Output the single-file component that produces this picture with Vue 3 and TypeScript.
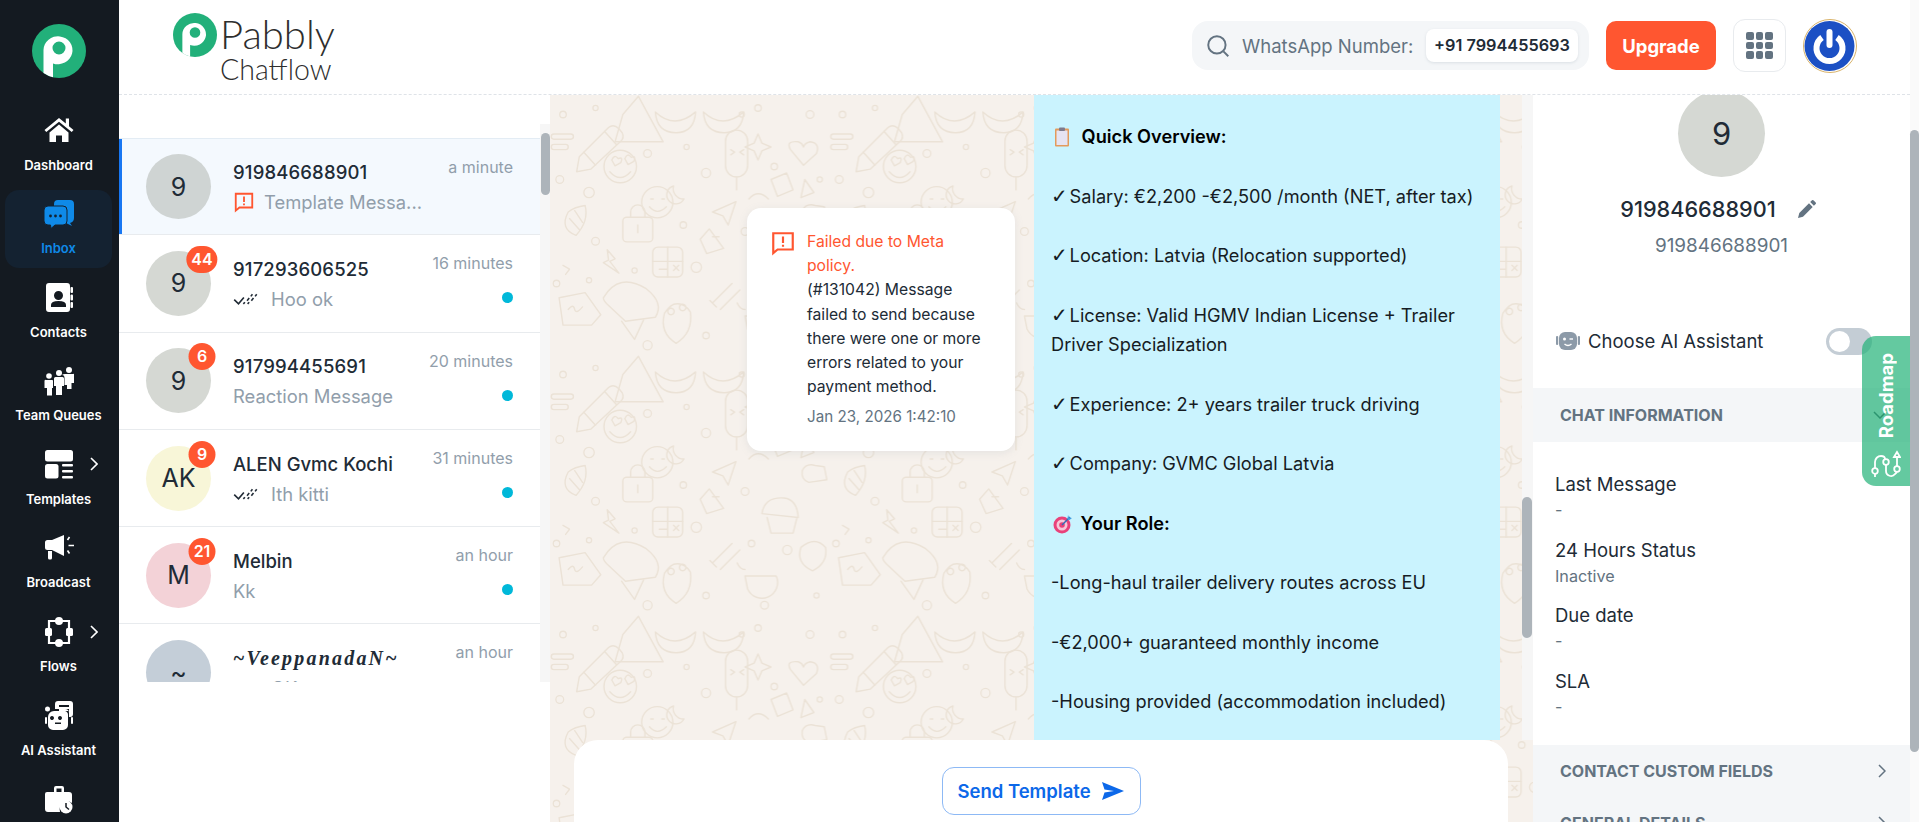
<template>
  <div class="app">
    <svg class="defs" width="0" height="0" aria-hidden="true">
      <symbol id="p-logo" viewBox="0 0 54 54">
        <circle cx="27" cy="27" r="27" fill="#22b07a" />
        <path
          fill="#fff"
          fill-rule="evenodd"
          d="M11.5 26a14.5 14 0 1 1 9.5 13.4V53.3Q16 52 11.5 49zM27 17.5a6.5 6.5 0 1 0 0 13 6.5 6.5 0 0 0 0-13z"
        />
      </symbol>
      <symbol id="failed" viewBox="0 0 24 24">
        <path fill="none" stroke="#ff5630" stroke-width="2" d="M3 3h18v15H7l-4 3.4z" />
        <path fill="#ff5630" d="M11 6h2v6h-2zM11 13.5h2v2h-2z" />
      </symbol>
      <symbol id="read" viewBox="0 0 24 14">
        <path
          fill="none"
          stroke="#212b36"
          stroke-width="1.5"
          d="M1 8l4 4 5-6M9.500 12l1.500-1.500M13 9l2-2.500M16.500 5l1.500-2M13.500 12l1.500-1.500M17 9l2-2.500M20.500 5l1.500-2"
        />
      </symbol>
    </svg>

    <aside class="sidebar">
      <div class="side-logo">
        <svg width="54" height="54"><use href="#p-logo" /></svg>
      </div>
      <nav class="side-nav">
        <a v-for="item in navItems" :key="item.icon" class="nav-item" :class="{ active: item.active }">
          <svg class="nav-icon" viewBox="0 0 30 30" width="30" height="30" fill="#fff">
            <template v-if="item.icon === 'home'">
              <path d="M15 3 0.500 15l1.800 2.100L15 6.700l12.700 10.400 1.800-2.100-4.500-3.700V3.500h-3.200v5.100z" />
              <path d="M5.500 17.500 15 9.600l9.500 7.900V27H18v-6.500h-6V27H5.500z" />
            </template>
            <template v-else-if="item.icon === 'inbox'">
              <path fill="#0f8ae8" d="M10 5a4 4 0 0 1 4-4h12a4 4 0 0 1 4 4v14q0 4-4 5l2 3-5-2.400V11q0-4-4-4H10z" />
              <path fill="#0f8ae8" stroke="#142231" stroke-width="1" d="M4 7h15a4 4 0 0 1 4 4v11a4 4 0 0 1-4 4h-8l-4 3.500-.5-3.500H4a4 4 0 0 1-4-4V11a4 4 0 0 1 4-4z" />
              <circle cx="6.500" cy="17" r="1.400" fill="#142231" />
              <circle cx="11.500" cy="17" r="1.400" fill="#142231" />
              <circle cx="16.500" cy="17" r="1.400" fill="#142231" />
            </template>
            <template v-else-if="item.icon === 'contacts'">
              <path fill-rule="evenodd" d="M5 1h18a3 3 0 0 1 3 3v23a3 3 0 0 1-3 3H5a3 3 0 0 1-3-3V4a3 3 0 0 1 3-3zm9.500 8a4.500 4.500 0 1 0 0 9 4.500 4.500 0 0 0 0-9zM7 25h15v-2q0-4-7.500-4T7 23z" />
              <rect x="26.500" y="5" width="2.500" height="6" rx="1" />
              <rect x="26.500" y="12.500" width="2.500" height="6" rx="1" />
              <rect x="26.500" y="20" width="2.500" height="6" rx="1" />
            </template>
            <template v-else-if="item.icon === 'team'">
              <circle cx="25" cy="4" r="3" />
              <path d="M21 8h8a1 1 0 0 1 1 2v7h-2.500v6h-4.500V19H20.500V12q0-3-2.500-3 1-1 3-1z" />
              <circle cx="15" cy="7" r="3" />
              <path d="M11.500 11h7a1.500 1.500 0 0 1 1.500 1.500V20h-2v9h-6v-9H10v-7.500a1.500 1.500 0 0 1 1.500-1.500z" />
              <circle cx="5" cy="10" r="2.800" />
              <path d="M2 14h6.500a1 1 0 0 1 .5 1v7H8v7.500H3V22H.500v-7A1 1 0 0 1 2 14z" />
            </template>
            <template v-else-if="item.icon === 'templates'">
              <rect x="1" y="1" width="28" height="11.500" rx="2.500" />
              <rect x="1" y="15" width="13.500" height="14.500" rx="2.500" />
              <rect x="18" y="15" width="11" height="2.600" rx="1" />
              <rect x="18" y="21" width="11" height="2.600" rx="1" />
              <rect x="18" y="27" width="11" height="2.600" rx="1" />
            </template>
            <template v-else-if="item.icon === 'broadcast'">
              <path d="M20 2v21L8 17H3.500a2.500 2.500 0 0 1-2.500-2.500v-5A2.500 2.500 0 0 1 3.500 7H8z" />
              <path d="M4 18h4v7a1.500 1.500 0 0 1-1.500 1.500h-1A1.500 1.500 0 0 1 4 25z" />
              <path fill="none" stroke="#fff" stroke-width="1.600" d="M23.500 7l2-3M24.500 12.500H30M23.500 17.500l2 3" />
            </template>
            <template v-else-if="item.icon === 'flows'">
              <path fill="none" stroke="#fff" stroke-width="2.200" d="M5 4h20v22H5z" />
              <circle cx="15" cy="4" r="4" />
              <circle cx="15" cy="26" r="4" />
              <rect x="1" y="11" width="7" height="8" rx="1.500" />
              <rect x="22" y="11" width="7" height="8" rx="1.500" />
            </template>
            <template v-else-if="item.icon === 'ai'">
              <path fill-rule="evenodd" d="M14 1h12a3 3 0 0 1 3 3v10a3 3 0 0 1-3 3h-1V13a4 4 0 0 0-4-4H11V4a3 3 0 0 1 3-3zm1 4v2h10V5zm0 4v2h10V9z" />
              <path fill-rule="evenodd" d="M10 11h11a4 4 0 0 1 3 4v10a5 5 0 0 1-5 5H9a5 5 0 0 1-5-5V17a6 6 0 0 1 6-6zm0 7a2 2 0 1 0 0 .01zm8 0a2 2 0 1 0 0 .01zM11 24h6v-1.500h-6z" />
              <circle cx="3.500" cy="9" r="2.500" />
              <rect x="1" y="17" width="2" height="7" rx="1" />
              <rect x="27" y="17" width="2" height="7" rx="1" />
            </template>
            <template v-else>
              <path d="M3 8h7V4a2 2 0 0 1 2-2h6a2 2 0 0 1 2 2v4h5a3 3 0 0 1 3 3v8a8 8 0 0 0-12 9H4a3 3 0 0 1-3-3V10a2 2 0 0 1 2-2zm9.500 0h5V4.500h-5z" />
              <circle cx="22" cy="23" r="6.500" />
              <path fill="none" stroke="#141a21" stroke-width="1.500" d="M22 19v4l3 2.500" />
            </template>
          </svg>
          <span v-if="item.label" class="nav-label">{{ item.label }}</span>
          <svg v-if="item.more" class="nav-more" viewBox="0 0 8 14" width="8" height="14">
            <path fill="none" stroke="#fff" stroke-width="1.600" d="M1 1l6 6-6 6" />
          </svg>
        </a>
      </nav>
    </aside>

    <div class="main">
      <header class="topbar">
        <div class="brand">
          <svg width="44" height="44"><use href="#p-logo" /></svg>
          <div class="brand-text">
            <div class="brand-name">Pabbly</div>
            <div class="brand-sub">Chatflow</div>
          </div>
        </div>
        <div class="top-actions">
          <div class="number-box">
            <svg viewBox="0 0 24 24" width="26" height="26">
              <circle cx="11" cy="11" r="8" fill="none" stroke="#637381" stroke-width="1.800" />
              <path stroke="#637381" stroke-width="1.800" d="M17 17l4.500 4.500" />
            </svg>
            <span class="number-label">WhatsApp Number:</span>
            <span class="number-value">+91 7994455693</span>
          </div>
          <button class="upgrade">Upgrade</button>
          <div class="apps">
            <i v-for="n in 9" :key="n"></i>
          </div>
          <svg class="profile" viewBox="0 0 54 54" width="54" height="54">
            <circle cx="27" cy="27" r="26.500" fill="#fff" stroke="#d9b36a" />
            <circle cx="26.500" cy="27" r="25" fill="#1c50c4" />
            <path fill="none" stroke="#fff" stroke-width="6" d="M19 18.500a13 13 0 1 0 15 0" />
            <path stroke="#fff" stroke-width="6" stroke-linecap="round" d="M26.500 13v13" />
          </svg>
        </div>
      </header>

      <div class="body">
        <section class="list-panel">
          <div class="list-wrap">
            <div class="list">
              <div
                v-for="row in rows"
                :key="row.name"
                class="row"
                :class="{ selected: row.selected }"
              >
                <div class="avatar" :style="{ background: row.color }">
                  {{ row.initials }}
                  <span v-if="row.unread" class="badge">{{ row.unread }}</span>
                </div>
                <div class="row-text">
                  <div class="row-name" :class="{ fancy: row.fancy, digits: row.digits }">{{ row.name }}</div>
                  <div class="row-preview">
                    <svg v-if="row.status === 'failed'" class="failed-icon" width="22" height="22"><use href="#failed" /></svg>
                    <svg v-if="row.status === 'read'" class="read-icon" width="26" height="15"><use href="#read" /></svg>
                    <span>{{ row.preview }}</span>
                  </div>
                </div>
                <div class="row-meta">
                  <span class="row-time">{{ row.time }}</span>
                  <i v-if="row.dot" class="dot"></i>
                </div>
              </div>
            </div>
            <div class="list-track"><div class="list-thumb"></div></div>
          </div>
        </section>

        <section class="chat">
          <svg class="doodles" width="100%" height="100%" aria-hidden="true">
            <defs>
              <pattern id="doodle" width="430" height="400" patternUnits="userSpaceOnUse" patternTransform="scale(0.65)">
                <g fill="none" stroke="#ebe2d6" stroke-width="2.200" stroke-linecap="round" stroke-linejoin="round">
                  <path d="M45 95l45-45q8-6 16 2l5 6q4 8-3 14l-45 42-22 4z" />
                  <path d="M52 88l18 20M84 56l18 20" />
                  <path d="M112 30l24-28 38 70H100z" />
                  <circle cx="108" cy="110" r="25" />
                  <path d="M92 118q16 18 32 0" />
                  <path d="M95 100q4-10 10-2 8-4 4 6l-9 5zM115 98q4-10 10-2 8-4 4 6l-9 5z" />
                  <path d="M162 26q30 28 62 0-2 32-30 32-30 0-32-32z" />
                  <path d="M236 26q30 28 62 0-2 32-30 32-30 0-32-32z" />
                  <rect x="270" y="54" width="34" height="72" rx="17" />
                  <path d="M287 126v20M278 84l6 4-6 4M298 84l-6 4 6 4" />
                  <path d="M320 60l6 14 14 6-14 6-6 14-6-14-14-6 14-6z" />
                  <path d="M370 84q-8-14 12-12 6 2 8 8 2-6 10-8 16 2 10 18l-20 18z" />
                  <circle cx="165" cy="165" r="24" />
                  <path d="M155 160h4M172 160h4M153 172q12 14 26 0" />
                  <path d="M28 180q-14 26 12 36 20-22 14-46-16 2-26 10zM30 190l16 18M38 178l12 18" />
                  <path d="M118 188h34a6 6 0 0 1 6 6v26a6 6 0 0 1-6 6h-34a6 6 0 0 1-6-6v-26a6 6 0 0 1 6-6zM124 188v-8a10 10 0 0 1 22 0v8M135 200v12" />
                  <path d="M190 140a14 14 0 1 0 16 20 16 16 0 0 1-16-20z" />
                  <path d="M88 238l12 14-8 4 14 18-24-16 8-4zM20 262l10 6-6 8" />
                  <rect x="158" y="234" width="46" height="46" rx="8" />
                  <path d="M158 256h46M181 234v46M168 268h12M190 262l8 8M198 262l-8 8" />
                  <path d="M82 312q24-40 66-14 28 22 14 44l-46 6-28-26q-6-6-6-10z" />
                  <path d="M110 348l20 28 14-30" />
                  <path d="M14 312l40-8 24 34-14 16H20zM28 330q8-10 10 0 2 8 12-4" />
                  <path d="M176 336q-8 30 18 46 26-16 22-48-10-16-26-12-8 4-14 14zM186 328a5 5 0 1 0 .1 0M204 322a5 5 0 1 0 .1 0" />
                  <path d="M250 320l30-30M262 330l30-30M246 316l10 10" />
                  <path d="M300 340h48a20 20 0 0 1-44 20zM300 330q-8 0-12-10" />
                  <path d="M360 220q-30-2-34 24l56 6q-2-28-22-30zM334 250l6 24h34l6-24" />
                  <path d="M250 180l36-16-12 36-8-14zM306 160q14-16 30 0" />
                  <path d="M408 170q-14-4-20 8-2 14 10 18l28-4-4-20z" />
                  <path d="M245 206l22 30-26 8-10-22zM250 218h10" />
                  <path d="M386 296q22-18 38 0 4 24-20 36-26-12-18-36z" />
                  <path d="M6 60h26a4 4 0 0 1 0 8H6a4 4 0 0 1 0-8zM6 76h18a4 4 0 0 1 0 8H6a4 4 0 0 1 0-8z" />
                  <path d="M340 130l24-10 10 26-24 10zM392 130l14 20-20 8z" />
                </g>
                <g fill="none" stroke="#ebe2d6" stroke-width="2">
                  <circle v-for="c in specks" :key="c[0] * 1000 + c[1]" :cx="c[0]" :cy="c[1]" :r="c[2]" />
                </g>
              </pattern>
            </defs>
            <rect width="100%" height="100%" fill="url(#doodle)" />
          </svg>

          <div class="chat-scroll">
            <div class="messages">
              <div class="fail-card">
                <svg class="fail-icon" width="26" height="26"><use href="#failed" /></svg>
                <div class="fail-text">
                  <div class="fail-title">Failed due to Meta policy.</div>
                  <div class="fail-body">(#131042) Message failed to send because there were one or more errors related to your payment method.</div>
                  <div class="fail-date">Jan 23, 2026 1:42:10</div>
                </div>
              </div>
              <div class="bubble">
                <p class="strong first">
                  <svg class="emoji clip" viewBox="0 0 16 20" width="16" height="20">
                    <rect x="1" y="1.500" width="14" height="18" rx="1" fill="#e39a5c" />
                    <rect x="2.500" y="3.500" width="11" height="14.500" fill="#e6e3f2" />
                    <rect x="5" y="0.500" width="6" height="3.500" rx="1" fill="#7d7a8c" />
                  </svg>
                  Quick Overview:
                </p>
                <p v-for="line in overview" :key="line"><span class="tick">✓</span> {{ line }}</p>
                <p class="strong">
                  <svg class="emoji target" viewBox="0 0 20 20" width="20" height="20">
                    <circle cx="9" cy="11" r="8.500" fill="#e9417a" />
                    <circle cx="9" cy="11" r="5.500" fill="#f7c6d8" />
                    <circle cx="9" cy="11" r="2.800" fill="#e9417a" />
                    <path stroke="#2f6fb5" stroke-width="1.500" d="M9 11l8-8" />
                    <path fill="#3d9be0" d="M15 1l1 2.500L19 4l-2.500 2-2-1z" />
                  </svg>
                  Your Role:
                </p>
                <p>-Long-haul trailer delivery routes across EU</p>
                <p>-€2,000+ guaranteed monthly income</p>
                <p>-Housing provided (accommodation included)</p>
              </div>
            </div>
            <div class="chat-track"><div class="chat-thumb"></div></div>
          </div>

          <div class="composer">
            <button class="send">
              Send Template
              <svg viewBox="0 0 24 20" width="24" height="20">
                <path fill="#0c68e9" d="M1 1l22 9-22 9 2.500-7.500L13 10 3.500 8.500z" />
              </svg>
            </button>
          </div>
        </section>

        <section class="details">
          <div class="profile-head">
            <div class="big-avatar">9</div>
            <div class="big-name">
              <span>919846688901</span>
              <svg viewBox="0 0 20 20" width="20" height="20">
                <path fill="#637381" d="M1 19l1.300-5L12 4.300l3.700 3.700L6 17.700zM13.200 3.100l1.800-1.800a1 1 0 0 1 1.400 0l2.300 2.300a1 1 0 0 1 0 1.400L16.900 6.800z" />
              </svg>
            </div>
            <div class="big-sub">919846688901</div>
          </div>

          <div class="ai-row">
            <svg viewBox="0 0 24 20" width="24" height="20">
              <rect x="3" y="1" width="18" height="18" rx="6" fill="#8c9aa8" />
              <rect x="0" y="5" width="2.200" height="9" rx="1" fill="#8c9aa8" />
              <rect x="21.800" y="5" width="2.200" height="9" rx="1" fill="#8c9aa8" />
              <circle cx="8.500" cy="8" r="1.500" fill="#fff" />
              <path stroke="#fff" stroke-width="1.400" d="M13.500 8h3.500" />
              <path fill="none" stroke="#fff" stroke-width="1.400" d="M8.500 13q3.500 3 7 0" />
            </svg>
            <span>Choose AI Assistant</span>
            <div class="toggle"><i></i></div>
          </div>

          <div class="section-head">
            <span>CHAT INFORMATION</span>
            <svg viewBox="0 0 14 8" width="14" height="8">
              <path fill="none" stroke="#454f5b" stroke-width="1.500" d="M1 1l6 6 6-6" />
            </svg>
          </div>
          <dl class="fields">
            <template v-for="f in fields" :key="f.label">
              <dt>{{ f.label }}</dt>
              <dd>{{ f.value }}</dd>
            </template>
          </dl>
          <div class="section-head closed">
            <span>CONTACT CUSTOM FIELDS</span>
            <svg viewBox="0 0 8 14" width="8" height="14">
              <path fill="none" stroke="#637381" stroke-width="1.500" d="M1 1l6 6-6 6" />
            </svg>
          </div>
          <div class="section-head closed">
            <span>GENERAL DETAILS</span>
            <svg viewBox="0 0 8 14" width="8" height="14">
              <path fill="none" stroke="#637381" stroke-width="1.500" d="M1 1l6 6-6 6" />
            </svg>
          </div>

          <div class="roadmap">
            <span>Roadmap</span>
            <svg viewBox="0 0 30 30" width="30" height="30">
              <g fill="none" stroke="#fff" stroke-width="1.800">
                <circle cx="4" cy="22" r="2.800" />
                <circle cx="15" cy="13" r="2.800" />
                <circle cx="26" cy="20" r="2.800" />
                <path d="M4 19v-6a6 6 0 0 1 6-6q4 0 4 3M15 16v6a5 5 0 0 0 9 3q2-2 2-2M26 17V9M4 25v3" />
                <path d="M23 8l3-5 3 5z" />
              </g>
            </svg>
          </div>
        </section>
      </div>
    </div>

    <div class="page-track"><div class="page-thumb"></div></div>
  </div>
</template>

<script setup lang="ts">
type NavItem = { label: string; icon: string; active?: boolean; more?: boolean };
type Row = {
  name: string;
  initials: string;
  color: string;
  time: string;
  preview: string;
  status?: "failed" | "read";
  unread?: number;
  dot?: boolean;
  selected?: boolean;
  fancy?: boolean;
  digits?: boolean;
};

const navItems: NavItem[] = [
  { label: "Dashboard", icon: "home" },
  { label: "Inbox", icon: "inbox", active: true },
  { label: "Contacts", icon: "contacts" },
  { label: "Team Queues", icon: "team" },
  { label: "Templates", icon: "templates", more: true },
  { label: "Broadcast", icon: "broadcast" },
  { label: "Flows", icon: "flows", more: true },
  { label: "AI Assistant", icon: "ai" },
  { label: "", icon: "jobs" }, // label is below the fold
];

const rows: Row[] = [
  { name: "919846688901", digits: true, initials: "9", color: "#cfd4d3", time: "a minute", preview: "Template Messa...", status: "failed", selected: true },
  { name: "917293606525", digits: true, initials: "9", color: "#d5d8d3", time: "16 minutes", preview: "Hoo ok", status: "read", unread: 44, dot: true },
  { name: "917994455691", digits: true, initials: "9", color: "#d5d8d3", time: "20 minutes", preview: "Reaction Message", unread: 6, dot: true },
  { name: "ALEN Gvmc Kochi", initials: "AK", color: "#f8f6d8", time: "31 minutes", preview: "Ith kitti", status: "read", unread: 9, dot: true },
  { name: "Melbin", initials: "M", color: "#f3d2d7", time: "an hour", preview: "Kk", unread: 21, dot: true },
  { name: "~VeeppanadaN~", initials: "~", color: "#c4ced8", time: "an hour", preview: "OK", status: "read", fancy: true },
];

const overview = [
  "Salary: €2,200 -€2,500 /month (NET, after tax)",
  "Location: Latvia (Relocation supported)",
  "License: Valid HGMV Indian License + Trailer Driver Specialization",
  "Experience: 2+ years trailer truck driving",
  "Company: GVMC Global Latvia",
];

const fields = [
  { label: "Last Message", value: "-" },
  { label: "24 Hours Status", value: "Inactive" },
  { label: "Due date", value: "-" },
  { label: "SLA", value: "-" },
];

// little circles scattered over the wallpaper tile
const specks: number[][] = [
  [20, 30, 5], [70, 20, 4], [150, 90, 6], [210, 80, 4], [240, 120, 7], [320, 20, 5], [400, 30, 6],
  [15, 130, 6], [60, 150, 8], [205, 200, 5], [300, 210, 6], [345, 110, 5], [415, 130, 4], [70, 225, 6],
  [225, 265, 8], [310, 290, 5], [365, 300, 7], [10, 290, 5], [60, 285, 4], [150, 385, 7], [240, 370, 5],
  [330, 385, 6], [410, 370, 4], [295, 30, 4], [130, 270, 4],
];
</script>

<style scoped>
.app {
  display: flex;
  width: 1919px;
  height: 822px;
  overflow: hidden;
  background: #fff;
  font-family: Inter, "Liberation Sans", sans-serif;
  color: #212b36;
}
.defs {
  position: absolute;
}

/* sidebar */
.sidebar {
  width: 119px;
  flex: none;
  background: #141a21;
  padding: 24px 7px 0 5px;
  box-sizing: border-box;
  overflow: hidden;
}
.side-logo {
  display: flex;
  justify-content: center;
  height: 82px;
}
.side-nav {
  display: flex;
  flex-direction: column;
  gap: 5.6px;
}
.nav-item {
  position: relative;
  flex: none;
  height: 78px;
  border-radius: 14px;
  display: flex;
  flex-direction: column;
  align-items: center;
  padding-top: 9px;
  box-sizing: border-box;
  color: #fff;
}
.nav-item.active {
  background: #142231;
  color: #0f8ae8;
}
.nav-label {
  margin-top: 10.5px;
  font-size: 13px;
  line-height: 18px;
  font-weight: 600;
  white-space: nowrap;
}
.nav-more {
  position: absolute;
  left: 85px;
  top: 17px;
}

/* top bar */
.main {
  flex: 1;
  min-width: 0;
  display: flex;
  flex-direction: column;
}
.topbar {
  height: 95px;
  flex: none;
  box-sizing: border-box;
  border-bottom: 1px dashed #dfe3e8;
  display: flex;
  justify-content: space-between;
  padding: 0 53px 0 54px;
}
.brand {
  display: flex;
  padding-top: 13px;
  color: #2e2e2e;
  font-family: Lato, sans-serif;
}
.brand-text {
  margin-left: 3px;
}
.brand-name {
  font-size: 40px;
  line-height: 42px;
  font-weight: 300;
}
.brand-sub {
  font-size: 28.5px;
  line-height: 28px;
  font-weight: 300;
}
.top-actions {
  display: flex;
  align-items: center;
  height: 91px;
  gap: 17px;
}
.number-box {
  display: flex;
  align-items: center;
  width: 397px;
  height: 49px;
  box-sizing: border-box;
  padding: 0 11px 0 13px;
  background: #f4f6f8;
  border-radius: 16px;
}
.number-label {
  margin-left: 11px;
  font-size: 18.5px;
  color: #637381;
  white-space: nowrap;
}
.number-value {
  margin-left: auto;
  width: 152px;
  height: 33px;
  line-height: 33px;
  text-align: center;
  background: #fff;
  border-radius: 8px;
  box-shadow: 0 1px 3px rgba(145, 158, 171, 0.25);
  font-size: 16.3px;
  font-weight: 600;
  white-space: nowrap;
}
.upgrade {
  width: 110px;
  height: 49px;
  border: none;
  border-radius: 10px;
  background: #ff5630;
  color: #fff;
  font: 700 18.5px Inter, sans-serif;
}
.apps {
  width: 53px;
  height: 53px;
  box-sizing: border-box;
  border: 1px solid #e8ebee;
  border-radius: 12px;
  display: grid;
  grid-template-columns: repeat(3, 7.500px);
  grid-auto-rows: 7.500px;
  gap: 2px;
  justify-content: center;
  align-content: center;
}
.apps i {
  background: #637381;
  border-radius: 2px;
}
.profile {
  flex: none;
}

/* body columns */
.body {
  flex: 1;
  min-height: 0;
  display: flex;
}
.list-panel {
  width: 431px;
  flex: none;
}
.list-wrap {
  display: flex;
  height: 558px;
  margin-top: 29px;
}
.list {
  flex: 1;
  min-width: 0;
  padding-top: 14px;
  overflow: hidden;
}
.list-track {
  width: 10px;
  background: #f6f6f6;
}
.list-thumb {
  margin: 9px 0 0 1px;
  width: 9px;
  height: 62px;
  border-radius: 5px;
  background: #adb4ba;
}
.row {
  display: flex;
  align-items: center;
  height: 97.3px;
  box-sizing: border-box;
  border-bottom: 1px solid #e8ebee;
  padding: 0 27px;
}
.row.selected {
  background: #f4f9fe;
  border-top: 1px solid #e3ecf4;
  box-shadow: inset 3px 0 0 #1877f2;
}
.avatar {
  position: relative;
  flex: none;
  width: 65px;
  height: 65px;
  border-radius: 50%;
  display: flex;
  align-items: center;
  justify-content: center;
  font-size: 25px;
}
.badge {
  position: absolute;
  top: -5px;
  left: 56px;
  transform: translateX(-50%);
  min-width: 27px;
  height: 27px;
  box-sizing: border-box;
  padding: 0 5px;
  border-radius: 14px;
  background: #ff5630;
  color: #fff;
  font-size: 16px;
  font-weight: 600;
  line-height: 27px;
  text-align: center;
}
.row-text {
  flex: 1;
  min-width: 0;
  margin-left: 22px;
  margin-top: 2px;
}
.row-name {
  font-size: 18.5px;
  line-height: 28px;
  font-weight: 500;
  white-space: nowrap;
}
.row-name.digits {
  letter-spacing: 0.15px;
}
.row-name.fancy {
  font-family: "Liberation Serif", serif;
  font-style: italic;
  font-weight: 700;
  font-size: 20px;
  letter-spacing: 2.2px;
}
.row-preview {
  display: flex;
  align-items: center;
  height: 30px;
  margin-top: 1px;
  font-size: 18.4px;
  color: #919eab;
  white-space: nowrap;
}
.failed-icon {
  margin-right: 9px;
}
.read-icon {
  margin-right: 12px;
}
.row-meta {
  align-self: flex-start;
  display: flex;
  flex-direction: column;
  align-items: flex-end;
  flex: none;
  padding-top: 18px;
}
.row-time {
  font-size: 16px;
  line-height: 20px;
  color: #919eab;
  white-space: nowrap;
}
.dot {
  width: 11px;
  height: 11px;
  margin-top: 19px;
  border-radius: 50%;
  background: #00b8d9;
}

/* chat */
.chat {
  position: relative;
  width: 983px;
  flex: none;
  display: flex;
  flex-direction: column;
  background: #f6f1ec;
  overflow: hidden;
}
.doodles {
  position: absolute;
  inset: 0;
}
.chat-scroll {
  position: relative;
  height: 645px;
  flex: none;
  display: flex;
}
.messages {
  flex: 1;
  min-width: 0;
  display: flex;
  align-items: flex-start;
  padding-left: 197px;
  overflow: hidden;
}
.fail-card {
  flex: none;
  width: 268px;
  height: 243px;
  margin-top: 113px;
  box-sizing: border-box;
  background: #fff;
  border-radius: 14px;
  box-shadow: 0 2px 8px rgba(145, 158, 171, 0.16);
  padding: 22px 0 0 23px;
  display: flex;
}
.fail-icon {
  flex: none;
  margin-right: 11px;
}
.fail-text {
  width: 182px;
  font-size: 15.7px;
  line-height: 24.200px;
}
.fail-title {
  color: #ff5630;
}
.fail-body {
  color: #212b36;
}
.fail-date {
  margin-top: 6px;
  font-size: 15.2px;
  color: #637381;
  white-space: nowrap;
}
.bubble {
  flex: none;
  width: 466px;
  height: 645px;
  margin-left: 19px;
  box-sizing: border-box;
  padding: 27px 17px 0;
  background: #caf3fe;
  overflow: hidden;
  font-size: 18.2px;
  line-height: 29.750px;
  color: #161c24;
}
.bubble p {
  margin: 29.750px 0 0;
}
.bubble p.first {
  margin-top: 0;
}
.bubble .strong {
  font-weight: 600;
  color: #000;
}
.tick {
  display: inline-block;
  width: 13.5px;
  font-family: "DejaVu Sans", sans-serif;
  font-size: 20px;
  line-height: 0;
}
.emoji {
  vertical-align: -4px;
}
.emoji.clip {
  margin: 0 7px 0 3px;
}
.emoji.target {
  margin: 0 3px 0 2px;
}
.chat-track {
  width: 11px;
  flex: none;
  background: #f6f6f6;
  margin-left: auto;
}
.chat-thumb {
  width: 10px;
  height: 141px;
  margin-top: 402px;
  border-radius: 5px;
  background: #adb4ba;
}
.composer {
  position: relative;
  flex: 1;
  margin: 0 25px 0 24px;
  background: #fff;
  border-radius: 24px 24px 0 0;
  display: flex;
  justify-content: center;
  padding-top: 27px;
}
.send {
  width: 199px;
  height: 48px;
  display: flex;
  align-items: center;
  justify-content: center;
  gap: 10px;
  background: #fff;
  border: 1px solid #8db9f5;
  border-radius: 12px;
  color: #0c68e9;
  font: 600 18.5px Inter, sans-serif;
}

/* details */
.details {
  position: relative;
  flex: 1;
  min-width: 0;
  overflow: hidden;
}
.profile-head {
  height: 170px;
  margin-top: -5px;
  text-align: center;
}
.big-avatar {
  width: 87px;
  height: 87px;
  margin: 0 auto;
  border-radius: 50%;
  background: #d5d8d3;
  display: flex;
  align-items: center;
  justify-content: center;
  font-size: 31px;
}
.big-name {
  margin-top: 17px;
  display: flex;
  align-items: center;
  justify-content: center;
  gap: 21px;
  font-size: 21.7px;
  font-weight: 500;
  line-height: 30px;
  padding-right: 6px;
}
.big-sub {
  margin-top: 9px;
  font-size: 18.9px;
  line-height: 26px;
  color: #637381;
}
.ai-row {
  display: flex;
  align-items: center;
  gap: 8px;
  height: 28px;
  margin: 67px 0 0 23px;
  padding-right: 38px;
  font-size: 18.5px;
  white-space: nowrap;
}
.toggle {
  margin-left: auto;
  width: 46px;
  height: 27px;
  border-radius: 14px;
  background: #c4cdd5;
  position: relative;
}
.toggle i {
  position: absolute;
  left: 3px;
  top: 3px;
  width: 21px;
  height: 21px;
  border-radius: 50%;
  background: #fff;
}
.section-head {
  display: flex;
  align-items: center;
  justify-content: space-between;
  height: 54px;
  margin-top: 33px;
  padding: 0 23px 0 27px;
  background: #f4f6f8;
  font-size: 16px;
  font-weight: 700;
  color: #637381;
}
.section-head.closed {
  margin-top: 0;
  height: 52px;
  padding-right: 24px;
}
.fields {
  margin: 0;
  padding: 29px 22px 0;
  height: 303px;
  box-sizing: border-box;
}
.fields dt {
  font-size: 18.5px;
  line-height: 26px;
}
.fields dd {
  margin: 0 0 12.500px;
  font-size: 16.2px;
  line-height: 27px;
  color: #637381;
}
.roadmap {
  position: absolute;
  right: 0;
  top: 241px;
  width: 48px;
  height: 150px;
  box-sizing: border-box;
  padding-top: 17px;
  border-radius: 14px 0 0 14px;
  background: rgba(34, 178, 120, 0.7);
  display: flex;
  flex-direction: column;
  align-items: center;
  gap: 11px;
  color: #fff;
}
.roadmap span {
  writing-mode: vertical-rl;
  transform: rotate(180deg);
  font-size: 18.5px;
  font-weight: 700;
  line-height: 20px;
}

/* page scrollbar */
.page-track {
  width: 9px;
  flex: none;
  background: #fafafa;
}
.page-thumb {
  height: 622px;
  margin-top: 130px;
  border-radius: 5px;
  background: #adb4ba;
}
</style>
